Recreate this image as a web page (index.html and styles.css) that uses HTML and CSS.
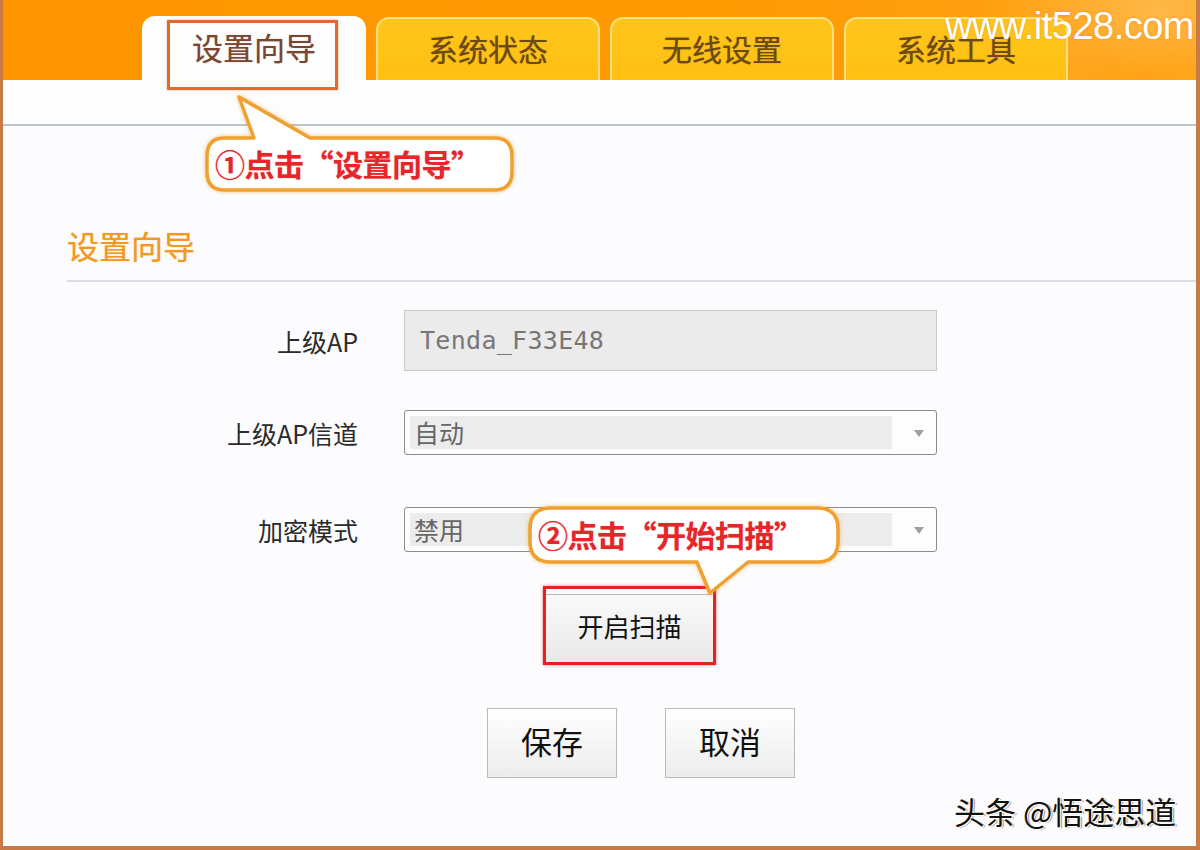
FILE: index.html
```html
<!DOCTYPE html>
<html lang="zh-CN">
<head>
<meta charset="utf-8">
<title>设置向导</title>
<link rel="stylesheet" href="styles.css">
</head>
<body>
<div class="frame">
  <div class="header">
    <div class="tab tab-active">设置向导</div>
    <div class="tab">系统状态</div>
    <div class="tab">无线设置</div>
    <div class="tab">系统工具</div>
    <div class="site-mark">www.it528.com</div>
  </div>
  <div class="subnav"></div>

  <div class="content">
    <div class="section-title">设置向导</div>

    <div class="form-row row-ap">
      <div class="label">上级AP</div>
      <div class="text-input">Tenda_F33E48</div>
    </div>

    <div class="form-row row-channel">
      <div class="label">上级AP信道</div>
      <div class="select">
        <div class="select-value">自动</div>
        <div class="select-arrow"></div>
      </div>
    </div>

    <div class="form-row row-mode">
      <div class="label">加密模式</div>
      <div class="select">
        <div class="select-value">禁用</div>
        <div class="select-arrow"></div>
      </div>
    </div>

    <div class="scan-row">
      <div class="scan-btn"><span>开启扫描</span></div>
    </div>

    <div class="action-row">
      <div class="btn">保存</div>
      <div class="btn">取消</div>
    </div>
  </div>

  <div class="tab-highlight"></div>

  <svg class="callout-shapes" width="1200" height="850" viewBox="0 0 1200 850">
    <path class="callout-path" d="M225 138 L254 138 L239 97 L310 138 L494 138 Q512 138 512 156 L512 172 Q512 190 494 190 L225 190 Q207 190 207 172 L207 156 Q207 138 225 138 Z"/>
    <path class="callout-path" d="M551 508 L817 508 Q838 508 838 529 L838 541 Q838 562 817 562 L748 562 L710 593 L697 562 L551 562 Q530 562 530 541 L530 529 Q530 508 551 508 Z"/>
  </svg>
  <div class="callout-text callout-1">①点击“设置向导”</div>
  <div class="callout-text callout-2">②点击“开始扫描”</div>

  <div class="author-mark">头条 @悟途思道</div>
</div>
</body>
</html>
```

FILE: styles.css
```css
* { box-sizing: border-box; }

html, body {
  margin: 0;
  padding: 0;
  background: #fcfcfe;
}

body {
  font-family: "Noto Sans CJK SC", "Noto Sans", sans-serif;
  color: #222;
}

.frame {
  position: relative;
  width: 1200px;
  height: 850px;
  overflow: hidden;
  background: #fcfcfe;
  border-left: 3px solid #c97b45;
  border-right: 4px solid #c97b45;
  border-bottom: 4px solid #c97b45;
}

/* ---------- header ---------- */
.header {
  position: relative;
  height: 80px;
  display: flex;
  align-items: flex-end;
  gap: 10px;
  padding-left: 139px;
  background:
    radial-gradient(ellipse 220px 90px at 1150px 10px, rgba(255, 200, 110, 0.55), rgba(255, 200, 110, 0) 70%),
    radial-gradient(ellipse 160px 70px at 1000px 70px, rgba(255, 190, 90, 0.35), rgba(255, 190, 90, 0) 70%),
    linear-gradient(90deg, #ff9500 0%, #ff9a02 60%, #ffa51c 100%);
}

.tab {
  width: 224px;
  height: 63px;
  border: 2px solid #ffe184;
  border-bottom: none;
  border-radius: 13px 13px 0 0;
  background: linear-gradient(#ffc51c, #ffc012);
  font-size: 30px;
  line-height: 58px;
  text-align: center;
  color: #6b4a14;
  text-shadow: 0 0 1px rgba(80, 50, 0, 0.6);
}

.tab-active {
  width: 224px;
  height: 64px;
  border: none;
  background: #fefefe;
  color: #7a4630;
  font-size: 31px;
  line-height: 62px;
  text-shadow: 0 0 1px rgba(110, 50, 20, 0.5);
}

.site-mark {
  position: absolute;
  right: 2px;
  top: 5px;
  font-family: "Liberation Sans", Arial, sans-serif;
  font-size: 38px;
  color: #ffffff;
  letter-spacing: -0.5px;
  text-shadow: 0 0 2px rgba(200, 110, 0, 0.5);
}

.subnav {
  height: 46px;
  border-bottom: 2px solid #bcc3cd;
  background: #fdfdfe;
}

/* ---------- content ---------- */
.content {
  padding-left: 64px;
}

.section-title {
  margin-top: 98px;
  height: 58px;
  padding-bottom: 16px;
  font-size: 32px;
  line-height: 42px;
  color: #f29a1f;
  text-shadow: 0 0 1px rgba(240, 140, 20, 0.6);
  border-bottom: 2px solid #d9dee6;
}

.form-row {
  display: flex;
  align-items: center;
  margin-left: -64px;
}

.label {
  width: 355px;
  text-align: right;
  font-size: 25px;
  color: #2a2a2a;
  margin-right: 46px;
}

.row-ap { margin-top: 28px; }
.row-channel { margin-top: 39px; }
.row-mode { margin-top: 52px; }

.text-input {
  width: 533px;
  height: 61px;
  border: 1px solid #c9c9c9;
  background: #ebebeb;
  padding-left: 15px;
  font-family: "DejaVu Sans Mono", "Liberation Mono", monospace;
  font-size: 25px;
  line-height: 59px;
  color: #777;
  letter-spacing: 0.3px;
}

.select {
  position: relative;
  width: 533px;
  height: 45px;
  border: 1px solid #8c8c8c;
  border-radius: 3px;
  background: #fdfdfd;
  padding: 5px 44px 5px 5px;
}

.select-value {
  height: 33px;
  background: #ececec;
  padding-left: 4px;
  font-size: 25px;
  line-height: 33px;
  color: #666;
}

.select-arrow {
  position: absolute;
  right: 12px;
  top: 19px;
  width: 0;
  height: 0;
  border-left: 5px solid transparent;
  border-right: 5px solid transparent;
  border-top: 7px solid #a0a0a0;
}

.scan-row {
  display: flex;
  margin-top: 34px;
  padding-left: 476px;
}

.scan-btn {
  width: 173px;
  height: 79px;
  border: 3px solid #e2231f;
  box-shadow: 0 0 3px rgba(230, 30, 30, 0.6);
  background: linear-gradient(#fbfbfb, #e9e9e9);
  padding-top: 5px;
}

.scan-btn span {
  display: block;
  height: 100%;
  border-top: 1px solid #b8b8b8;
  font-size: 26px;
  line-height: 62px;
  text-align: center;
  color: #111;
}

.action-row {
  display: flex;
  gap: 48px;
  margin-top: 43px;
  padding-left: 420px;
}

.btn {
  width: 130px;
  height: 70px;
  border: 1px solid #b9b9b9;
  background: linear-gradient(#ffffff, #ececec);
  font-size: 31px;
  line-height: 64px;
  text-align: center;
  color: #111;
}

/* ---------- annotations (overlays) ---------- */
.tab-highlight {
  position: absolute;
  left: 164px;
  top: 20px;
  width: 171px;
  height: 70px;
  border: 3px solid #dd6a2e;
  box-shadow: 0 0 2px rgba(220, 100, 40, 0.5);
}

.callout-shapes {
  position: absolute;
  left: -3px;
  top: 0;
  pointer-events: none;
}

.callout-path {
  fill: #ffffff;
  stroke: #f0a030;
  stroke-width: 3.5;
  stroke-linejoin: round;
  filter: drop-shadow(0 0 2px rgba(240, 160, 40, 0.6));
}

.callout-text {
  position: absolute;
  font-size: 30px;
  font-weight: 700;
  color: #e6262b;
  white-space: nowrap;
  line-height: 40px;
  letter-spacing: -0.5px;
  text-shadow: 0 0 1px rgba(230, 40, 40, 0.5);
}

.callout-1 {
  left: 212px;
  top: 143px;
}

.callout-2 {
  left: 535px;
  top: 514px;
}

.author-mark {
  position: absolute;
  left: 951px;
  top: 791px;
  font-size: 31px;
  line-height: 40px;
  color: #111;
  white-space: nowrap;
  text-shadow: 1px 1px 0 #fff, -1px -1px 0 #fff, 2px 1px 1px #888;
}
```
